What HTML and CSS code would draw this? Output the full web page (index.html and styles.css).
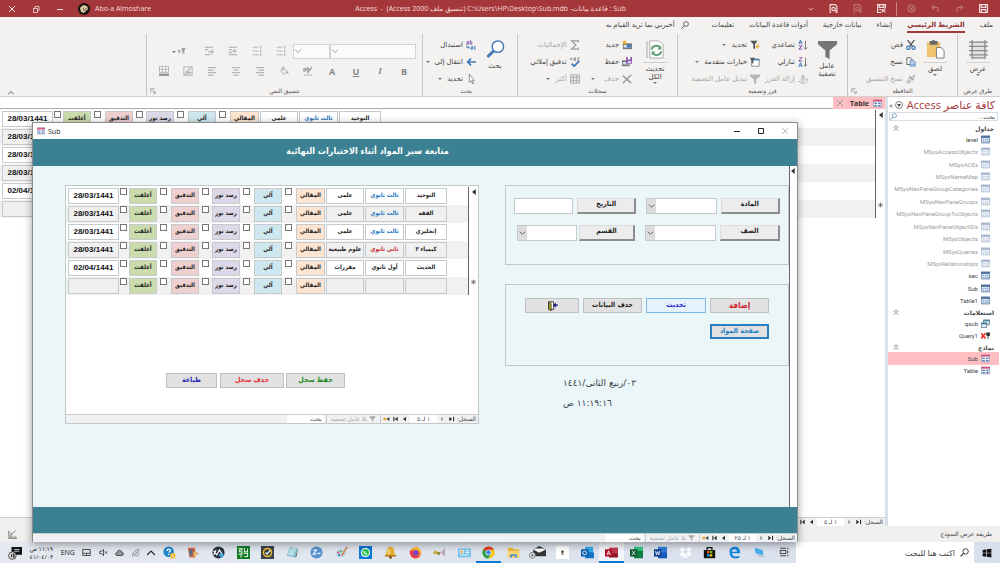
FILE: index.html
```html
<!DOCTYPE html>
<html lang="ar" dir="rtl">
<head>
<meta charset="utf-8">
<title>Sub - Access</title>
<link rel="stylesheet" href="styles.css">
</head>
<body>
<svg class="sprite" aria-hidden="true">
  <symbol id="save" viewBox="0 0 16 16"><path d="M1 1h14v14H1zM4 1v5h8V1M4 15v-5h8v5" fill="none" stroke="currentColor" stroke-width="2"/></symbol>
  <symbol id="saveas" viewBox="0 0 16 16"><path d="M15 7V1H1v14h6M4 1v5h8V1M4 10h4" fill="none" stroke="currentColor" stroke-width="2"/><path d="M8 15l7-7M9 9l6 6" stroke="currentColor" stroke-width="2"/></symbol>
  <symbol id="redo" viewBox="0 0 16 16"><path d="M10 2l4 4-4 4M14 6H6c-4 0-4 7 0 7" fill="none" stroke="currentColor" stroke-width="2"/></symbol>
  <symbol id="undo" viewBox="0 0 16 16"><path d="M6 2L2 6l4 4M2 6h8c4 0 4 7 0 7" fill="none" stroke="currentColor" stroke-width="2"/></symbol>
  <symbol id="touch" viewBox="0 0 16 16"><circle cx="8" cy="8" r="6" fill="none" stroke="currentColor" stroke-width="2"/><path d="M5 6l6 5M11 5l-5 6" stroke="currentColor" stroke-width="2"/></symbol>
  <symbol id="preview" viewBox="0 0 16 16"><path d="M4 15H2V1h9l3 3v11h-2" fill="none" stroke="currentColor" stroke-width="2"/><circle cx="8" cy="9" r="3" fill="none" stroke="currentColor" stroke-width="2"/><path d="M10 11l4 4" stroke="currentColor" stroke-width="2"/></symbol>
  <symbol id="mag" viewBox="0 0 16 16"><circle cx="10" cy="6" r="4.8" fill="none" stroke="currentColor" stroke-width="1.5"/><path d="M6.500 9.500L1 15" stroke="currentColor" stroke-width="1.800"/></symbol>
  <symbol id="find" viewBox="0 0 20 20"><circle cx="12.500" cy="7" r="6" fill="#fff" stroke="#3f78b8" stroke-width="1.500"/><path d="M8 11.500L1.500 18" stroke="#3f78b8" stroke-width="3"/></symbol>
  <symbol id="view" viewBox="0 0 18 18"><path d="M1 1h16v16H1z" fill="#e4e4e4"/><path d="M0 2h18M0 6h18M0 10h18M0 14h18M3 0v18M15 0v18M3 17h12" stroke="#8a8a8a" stroke-width="1.200"/></symbol>
  <symbol id="paste" viewBox="0 0 20 20"><path d="M1 2h14v16H1z" fill="#eec471"/><path d="M4 1h8v4H4z" fill="#666"/><circle cx="8" cy="1.500" r="1.500" fill="#666"/><path d="M11 8h5l3 3v8h-8z" fill="#fff" stroke="#777"/></symbol>
  <symbol id="cut" viewBox="0 0 12 12"><path d="M2 0l6 8M10 0L4 8" stroke="#555" stroke-width="1.500"/><circle cx="2.800" cy="9.300" r="2" fill="none" stroke="#3f78b8" stroke-width="1.500"/><circle cx="9" cy="9.300" r="2" fill="none" stroke="#3f78b8" stroke-width="1.500"/></symbol>
  <symbol id="copy" viewBox="0 0 12 12"><path d="M1 1h5l1 1v7H1z" fill="#fff" stroke="#555"/><path d="M5 4h4l2 2v5H5z" fill="#dbe9f7" stroke="#3f78b8"/><path d="M6 7h4M6 9h4" stroke="#3f78b8" stroke-width=".7"/></symbol>
  <symbol id="brush" viewBox="0 0 12 12"><path d="M11 1L8 4" stroke="#aaa" stroke-width="2"/><path d="M5 2l5 4-2 2-5-4z" fill="#999"/><path d="M3 5l4 4-4 3-3-2z" fill="#bbb"/></symbol>
  <symbol id="funnel" viewBox="0 0 18 18"><path d="M0 1h18v3l-7 6v8l-4-2v-6L0 4z" fill="currentColor"/></symbol>
  <symbol id="bolt" viewBox="0 0 12 12"><path d="M0 1h9L6 5v6L4 10V5z" fill="#555"/><path d="M10 4L6 9h3l-1 3 4-5H9l2-3z" fill="#edb23c"/></symbol>
  <symbol id="adv" viewBox="0 0 12 12"><path d="M2 3h9v8H2z" fill="#fff" stroke="#777"/><path d="M1 2h10v2H1z" fill="#3f78b8"/><path d="M0 1h6L4 4v4L2 7V4z" fill="#555"/></symbol>
  <symbol id="az" viewBox="0 0 12 12"><path d="M1 5l2-5 2 5M2 3.500h2" fill="none" stroke="#3f78b8" stroke-width="1.200"/><path d="M1 7h4l-4 4h4" fill="none" stroke="#8353a5" stroke-width="1.200"/><path d="M9 1v10M7 9l2 2 2-2" fill="none" stroke="#666"/></symbol>
  <symbol id="za" viewBox="0 0 12 12"><path d="M1 0h4L1 5h4" fill="none" stroke="#8353a5" stroke-width="1.200"/><path d="M1 12l2-5 2 5M2 10h2" fill="none" stroke="#3f78b8" stroke-width="1.200"/><path d="M9 1v10M7 9l2 2 2-2" fill="none" stroke="#666"/></symbol>
  <symbol id="unsort" viewBox="0 0 12 12"><path d="M4 6l2-5 2 5M5 4h2M4 7h4l-4 4h4M0 9h3l1 2M9 6h2v2L9 11" fill="none" stroke="#999"/></symbol>
  <symbol id="refresh" viewBox="0 0 20 20"><path d="M4 1h10l4 4v14H4z" fill="#fff" stroke="#aaa"/><path d="M1 1v18" stroke="#ccc" stroke-width="2"/><path d="M6 10c1-5 8-5 9-1M16 12c-1 5-8 5-9 1" fill="none" stroke="#5d9b73" stroke-width="2"/><path d="M16 6v4h-4zM6 16v-4h4z" fill="#5d9b73"/></symbol>
  <symbol id="new" viewBox="0 0 12 12"><path d="M1 4h11v7H1z" fill="#777"/><path d="M2 6h9v3H2z" fill="#cfe0f2"/><path d="M6 6h5v3H6z" fill="#3f78b8"/><circle cx="3" cy="3" r="2.300" fill="#edb23c"/></symbol>
  <symbol id="saverec" viewBox="0 0 12 12"><path d="M0 4h9v7H0z" fill="#777"/><path d="M1 6h7v3H1z" fill="#cfe0f2"/><path d="M5 0h7v8H5z" fill="#8353a5"/><path d="M7 0h3v3H7zM7 5h4v2H7z" fill="#fff"/></symbol>
  <symbol id="del" viewBox="0 0 12 12"><path d="M1 2l10 9M11 1L1 11" stroke="#888" stroke-width="1.800"/></symbol>
  <symbol id="sigma" viewBox="0 0 12 12"><path d="M10 3V1H2l5 5-5 5h8V9" fill="none" stroke="#888" stroke-width="1.500"/></symbol>
  <symbol id="spell" viewBox="0 0 12 12"><path d="M0 4l1.500-3L3 4M5 1v3h2L6 2.500 7 1zM11.500 1h-2v3h2" fill="none" stroke="#666" stroke-width=".8"/><path d="M2 8l3 3 6-6" fill="none" stroke="#3f78b8" stroke-width="2"/></symbol>
  <symbol id="more" viewBox="0 0 12 12"><path d="M.5 1h11v10H.5zM0 4h12M0 8h12M4 1v10M8 1v10" fill="#e6dfe6" stroke="#999"/></symbol>
  <symbol id="replace" viewBox="0 0 12 12"><path d="M1 2h2v3H1V3.500h2M5 0v5h2V2H5" fill="none" stroke="#8353a5"/><path d="M6 8h2v3H6V9.500h2M12 8h-2v3h2M1 6v3h3M3 7.500L4.500 9 3 10.500" fill="none" stroke="#3f78b8"/></symbol>
  <symbol id="goto" viewBox="0 0 12 12"><path d="M12 6H2M6 2L2 6l4 4" fill="none" stroke="#3f78b8" stroke-width="2"/></symbol>
  <symbol id="cursor" viewBox="0 0 12 12"><path d="M4 0v10l2-2 2 4 1-.5L7.500 8H10z" fill="#fff" stroke="#666" stroke-width=".8"/></symbol>
  <symbol id="list" viewBox="0 0 12 12"><path d="M1 1.500h7M1 6h7M1 10.500h7" stroke="#aaa"/><path d="M10.500 0v3M10.500 4.500v3M10.500 9v3" stroke="#999"/></symbol>
  <symbol id="indent" viewBox="0 0 12 12"><path d="M1 1.500h10M1 4.500h4M1 7.500h4M1 10.500h10M6 6h5M8 4L6 6l2 2" fill="none" stroke="#999"/></symbol>
  <symbol id="outdent" viewBox="0 0 12 12"><path d="M1 1.500h10M1 4.500h4M1 10.500h6M5 7h6M9 4l2 3-2 3" fill="none" stroke="#999"/></symbol>
  <symbol id="para" viewBox="0 0 12 12"><path d="M11 2H7c-2 0-2 3 0 3V11M9 2v9M1 4v5l3-2.500z" fill="#999" stroke="#999" stroke-width=".8"/></symbol>
  <symbol id="ar" viewBox="0 0 12 12"><path d="M1 2h10M4 5h7M1 8h10M4 11h7" stroke="#999"/></symbol>
  <symbol id="ac" viewBox="0 0 12 12"><path d="M1 2h10M3 5h6M1 8h10M3 11h6" stroke="#999"/></symbol>
  <symbol id="al" viewBox="0 0 12 12"><path d="M1 2h10M1 5h7M1 8h10M1 11h7" stroke="#999"/></symbol>
  <symbol id="bucket" viewBox="0 0 12 12"><path d="M5 2l5 5-4 3-4-4zM5 5V0M10 7l1 3" fill="#eee" stroke="#999"/></symbol>
  <symbol id="hl" viewBox="0 0 12 12"><path d="M1 3h2v3H1zM5 1v5h2V3H5M11 1L5 9" fill="none" stroke="#999" stroke-width="1.300"/><path d="M1 10h10v2H1z" fill="#ccc"/></symbol>
  <symbol id="gridl" viewBox="0 0 12 12"><path d="M1 1h10v10H1zM1 11L11 1M4 5v6M7 3v8M4 8h7" fill="none" stroke="#999" stroke-width=".8"/></symbol>
  <symbol id="alt" viewBox="0 0 12 12"><path d="M.5.500h11v7H.5zM0 4h12M4 0v8M8 0v8" fill="#fff" stroke="#999" stroke-width=".8"/><path d="M0 9h12v3H0z" fill="#999"/></symbol>
  <symbol id="launch" viewBox="0 0 8 8"><path d="M1 6V1h5M3 3l4 4M7 4v3H4" fill="none" stroke="#888"/></symbol>
  <symbol id="chev" viewBox="0 0 8 8"><path d="M1 2.500l3 3 3-3" fill="none" stroke="currentColor"/></symbol>
  <symbol id="up" viewBox="0 0 8 8"><path d="M0 6l4-4 4 4" fill="none" stroke="currentColor" stroke-width="1.200"/></symbol>
  <symbol id="dup" viewBox="0 0 8 8"><path d="M1 4l3-3 3 3M1 7.500l3-3 3 3" fill="none" stroke="#555"/></symbol>
  <symbol id="x" viewBox="0 0 8 8"><path d="M1 1l6 6M7 1L1 7" stroke="currentColor" stroke-width="1"/></symbol>
  <symbol id="min" viewBox="0 0 8 8"><path d="M1 4.500h6" stroke="currentColor"/></symbol>
  <symbol id="max" viewBox="0 0 8 8"><path d="M1.500 1.500h5v5h-5z" fill="none" stroke="currentColor"/></symbol>
  <symbol id="restore" viewBox="0 0 8 8"><path d="M1.500 3.500h4v4h-4zM3 3V1.500h4v4H6" fill="none" stroke="currentColor" stroke-width=".8"/></symbol>
  <symbol id="tbl" viewBox="0 0 12 12"><path d="M.5 1.500h11v9H.5z" fill="#fff" stroke="#4d6f9c"/><path d="M0 1h12v3H0z" fill="#4d6f9c"/><path d="M0 6h12M0 8.500h12M3.500 2v9M6.500 2v9M9 2v9" stroke="#7d9cc4" stroke-width=".8"/></symbol>
  <symbol id="form" viewBox="0 0 12 12"><path d="M.5 1.500h11v9H.5z" fill="#eef2fb" stroke="#8a93b5"/><path d="M0 1h12v2.500H0z" fill="#d0577b"/><path d="M2 5h3v1.500H2zM7 5h3v1.500H7zM2 8h3v1.500H2zM7 8h3v1.500H7z" fill="#4a6fae"/></symbol>
  <symbol id="query" viewBox="0 0 12 12"><path d="M3.500 1.500h8v6h-8z" fill="#cde" stroke="#567"/><path d="M3 1h9v2H3z" fill="#4d8a9c"/><path d="M.5 5.500h7v6h-7z" fill="#def" stroke="#567"/><path d="M0 5h8v2H0z" fill="#3c7c92"/></symbol>
  <symbol id="queryx" viewBox="0 0 12 12"><path d="M0 3l6 7M6 3L0 10" stroke="#e22" stroke-width="2"/><path d="M7 2h5v4l-2 1v4H9V7L7 6z" fill="#333"/></symbol>
  <symbol id="selarrow" viewBox="0 0 6 8"><path d="M6 0v8L1 4z" fill="#333"/></symbol>
  <symbol id="star" viewBox="0 0 8 8"><path d="M4 0v8M0 4h8M1 1l6 6M7 1L1 7" stroke="#333" stroke-width=".8"/></symbol>
  <symbol id="first" viewBox="0 0 8 8"><path d="M1 1l4 3-4 3zM6 1h1.500v6H6z" fill="#333"/></symbol>
  <symbol id="prev" viewBox="0 0 8 8"><path d="M2 1l4 3-4 3z" fill="#aaa"/></symbol>
  <symbol id="next" viewBox="0 0 8 8"><path d="M6 1L2 4l4 3z" fill="#333"/></symbol>
  <symbol id="last" viewBox="0 0 8 8"><path d="M7 1L3 4l4 3zM1 1h1.500v6H1z" fill="#333"/></symbol>
  <symbol id="newrec" viewBox="0 0 10 8"><path d="M9 1L5 4l4 3z" fill="#333"/><circle cx="2.500" cy="4" r="2.300" fill="#e5a93a"/></symbol>
  <symbol id="door" viewBox="0 0 14 12"><path d="M3 1h6v9H3z" fill="#fff" stroke="#222"/><path d="M3 1l3 2v9l-3-2z" fill="#aa2" stroke="#222" stroke-width=".8"/><path d="M14 5h-4M11.500 3l-2 2 2 2" fill="none" stroke="#118" stroke-width="1.500"/></symbol>
  <symbol id="design" viewBox="0 0 12 12"><path d="M1 1v7h4M3 7l7-6M2 3l4 4M1 9.500h10v2H1z" fill="none" stroke="#666"/></symbol>

  <symbol id="win" viewBox="0 0 16 16"><path d="M1 3l6-1v5.500H1zM8 2l7-1v6.500H8zM1 8.500h6V14l-6-1zM8 8.500h7V15l-7-1z" fill="#111"/></symbol>
  <symbol id="task" viewBox="0 0 16 16"><path d="M2 5.500h9v5H2zM2 2h9M2 14h9M14 1v3M14 6v4M14 12v3" fill="none" stroke="#222" stroke-width="1.300"/></symbol>
  <symbol id="pc" viewBox="0 0 16 16"><path d="M2 2l10 3 1 7-10-3z" fill="#4ab0ec"/><path d="M3 10l9 2 3 1-6 1z" fill="#b8c4cf"/></symbol>
  <symbol id="edge" viewBox="0 0 16 16"><path d="M1 8C2 2 6 1 9 1c4 0 6 3 6 8H5c0 4 5 5 9 3v2c-5 3-12 1-12-5 0-3 3-5 5-5-2 1-2 2-2 3h6c0-4-7-4-10 1z" fill="#1183d8"/></symbol>
  <symbol id="store" viewBox="0 0 16 16"><path d="M1 5h14v10H1z" fill="#111"/><path d="M5 5V2h6v3" fill="none" stroke="#111" stroke-width="1.500"/><path d="M5 6h3v3H5z" fill="#f25022"/><path d="M8.500 6h3v3h-3z" fill="#7fba00"/><path d="M5 10h3v3H5z" fill="#00a4ef"/><path d="M8.500 10h3v3h-3z" fill="#ffb900"/></symbol>
  <symbol id="dropbox" viewBox="0 0 16 16"><path d="M4 1l4 3-4 3-4-3zM12 1l4 3-4 3-4-3zM4 7l4 3-4 3-4-3zM12 7l4 3-4 3-4-3zM8 11l3 2-3 2-3-2z" fill="#fff"/></symbol>
  <symbol id="word" viewBox="0 0 16 16"><path d="M5 1h11v14H5z" fill="#2b7cd3"/><path d="M5 8h11v7H5z" fill="#185abd"/><path d="M0 4h9v9H0z" fill="#103f91"/><path d="M2 6l1 5 1.500-4L6 11l1-5" fill="none" stroke="#fff"/></symbol>
  <symbol id="excel" viewBox="0 0 16 16"><path d="M5 1h11v14H5z" fill="#33c481"/><path d="M5 6h11v9H5z" fill="#107c41"/><path d="M0 4h9v9H0z" fill="#0c5c34"/><path d="M2.500 6l4 5M6.500 6l-4 5" stroke="#fff"/></symbol>
  <symbol id="access" viewBox="0 0 16 16"><path d="M5 2h11v12H5z" fill="#c03a4c"/><path d="M5 9h11v5H5z" fill="#8f1f30"/><path d="M0 4h9v9H0z" fill="#b3132b"/><path d="M2.500 11l2-5 2 5M3 9.500h3" fill="none" stroke="#fff"/></symbol>
  <symbol id="outlook" viewBox="0 0 16 16"><path d="M5 1h10v8H5z" fill="#35a6e6"/><path d="M5 7l11 1v7H5z" fill="#1573c4"/><path d="M0 4h9v9H0z" fill="#0f5fb0"/><circle cx="4.500" cy="8.500" r="2.300" fill="none" stroke="#fff"/></symbol>
  <symbol id="white" viewBox="0 0 16 16"><path d="M0 0h16v16H0z" fill="#fff"/><circle cx="8" cy="7" r="1.500" fill="#333"/><path d="M6.500 9h3v2h-3z" fill="#b87"/></symbol>
  <symbol id="mail" viewBox="0 0 20 16"><path d="M5 5l7-4 8 4v8H5z" fill="#333"/><path d="M5 5l7 4 8-4-4-1H8z" fill="#fff"/><circle cx="4" cy="12" r="3.500" fill="#ddd" stroke="#777"/><circle cx="4" cy="12" r="1" fill="#333"/></symbol>
  <symbol id="folder" viewBox="0 0 16 16"><path d="M1 2h6l1 2h7v10H1z" fill="#f1b83a"/><path d="M1 6h14v7H1z" fill="#fbd775"/><path d="M4 14v-4h8v4h-2v-2H6v2z" fill="#3b8fd1"/></symbol>
  <symbol id="chrome" viewBox="0 0 16 16"><circle cx="8" cy="8" r="7.500" fill="#f9c513"/><path d="M8 8L1.500 4.200A7.500 7.500 0 0 1 14.600 4.500H8z" fill="#e33b2e"/><path d="M8 8L1.500 4.200A7.500 7.500 0 0 0 7.500 15.500L11 10z" fill="#2ba24c"/><circle cx="8" cy="8" r="3.500" fill="#fff"/><circle cx="8" cy="8" r="2.700" fill="#3f7fe8"/></symbol>
  <symbol id="panel" viewBox="0 0 16 16"><path d="M0 3h16v11H0z" fill="#76c4ee"/><path d="M2 5h5v4H2z" fill="#fff"/><circle cx="4.500" cy="7" r="1.500" fill="#e69a2c"/><path d="M9 6h5M9 8h5M3 11h10" stroke="#fff"/></symbol>
  <symbol id="horn" viewBox="0 0 16 16"><circle cx="3" cy="8" r="2.500" fill="#c9b03a"/><circle cx="7" cy="9" r="2" fill="#8a8a3a"/><path d="M9 8l5-4v8z" fill="#c9a5b5"/><path d="M14 3v9" stroke="#999"/></symbol>
  <symbol id="firefox" viewBox="0 0 16 16"><circle cx="8" cy="8.500" r="7" fill="#f5832b"/><path d="M2 3c3 2 5-2 8-2 4 2 6 6 5 9-3-5-5-3-8-5z" fill="#fbc02d"/><circle cx="8.500" cy="8.500" r="3.500" fill="#8141c4"/><path d="M1 6c0 9 8 11 13 6-5 2-9 0-10-6z" fill="#e8344d"/></symbol>
  <symbol id="bell" viewBox="0 0 16 16"><path d="M8 1c5 0 4 6 6 10H2C4 7 3 1 8 1z" fill="#e9b231"/><path d="M1 11h14v2H1z" fill="#b87a16"/><circle cx="8" cy="14" r="1.800" fill="#8a5512"/><path d="M6 4v6" stroke="#fdf0b4" stroke-width="1.500"/></symbol>
  <symbol id="whats" viewBox="0 0 16 16"><path d="M0 0h16v16H0z" fill="#0a78d4"/><circle cx="8" cy="8" r="5" fill="#2bc155" stroke="#fff" stroke-width="1.300"/><path d="M3 13l1-3 2 2z" fill="#fff"/><path d="M6 6c0 2 2 4 4 4" fill="none" stroke="#fff" stroke-width="1.500"/></symbol>
  <symbol id="paint" viewBox="0 0 16 16"><ellipse cx="7" cy="9" rx="6.500" ry="5" fill="#bcd9ea"/><circle cx="4" cy="8" r="1.300" fill="#d44"/><circle cx="7" cy="6.500" r="1.300" fill="#4a4"/><circle cx="5" cy="11" r="1.300" fill="#36c"/><path d="M15 1L8 12" stroke="#c8884b" stroke-width="2"/></symbol>
  <symbol id="bluec" viewBox="0 0 16 16"><circle cx="8" cy="8" r="7.500" fill="#5b93cf"/><path d="M4 5h4L4 10h4M9 9h4" fill="none" stroke="#e6f0fa" stroke-width="1.500"/></symbol>
  <symbol id="note" viewBox="0 0 16 16"><path d="M5 1l10 2-4 11L1 12z" fill="#7fbccd"/><path d="M6 2l7 1-4 9-7-1z" fill="#b5dde7"/><path d="M15 3l-2 10-2 1z" fill="#567"/></symbol>
  <symbol id="norton" viewBox="0 0 16 16"><path d="M0 0h16v16H0z" fill="#3a4249"/><circle cx="8" cy="8" r="5" fill="none" stroke="#f2c22e" stroke-width="1.800"/><path d="M5.500 8l2 2 4-5" fill="none" stroke="#fff" stroke-width="1.500"/></symbol>
  <symbol id="green" viewBox="0 0 16 16"><path d="M0 0h16v16H0z" fill="#127a27"/><path d="M2 3h4v2H3v2h3v3H2M9 2v5h4V3M8 9h5v4H9M5 11v3" fill="none" stroke="#dff0df" stroke-width="1.300"/></symbol>
  <symbol id="sn" viewBox="0 0 16 16"><circle cx="8" cy="8" r="7.500" fill="#26323c"/><path d="M2 6l4 5 3-6 4 6M2 11l3-6" fill="none" stroke="#fff" stroke-width="1.500"/><path d="M8 10l5-1 2 3-4 3z" fill="#4ba3df"/></symbol>
  <symbol id="orange" viewBox="0 0 16 16"><path d="M1 2h9v12H3z" fill="#d9683a"/><path d="M3 4h4v8H3z" fill="#5a6b86"/><path d="M8 7l6 1v2l-6 3z" fill="#f0b35a"/><path d="M11 5v5h4" fill="none" stroke="#bbb"/></symbol>
  <symbol id="help" viewBox="0 0 16 16"><circle cx="7" cy="7" r="6.500" fill="#1d86cf"/><path d="M5 6c0-3 5-3 4 0L7 8M7 9.500v1.500" fill="none" stroke="#fff" stroke-width="1.500"/><circle cx="12" cy="12" r="3.500" fill="#f3b62c"/><path d="M12 10v4" stroke="#fff"/></symbol>
  <symbol id="wifi" viewBox="0 0 12 12"><path d="M1 11C1 5 5 1 11 1M4 11c0-4 3-7 7-7M7 11c0-2 2-4 4-4M10 10v1" fill="none" stroke="#666" stroke-width="1.200"/></symbol>
  <symbol id="cloud" viewBox="0 0 12 12"><path d="M3 10c-3 0-3-4 0-4 0-4 6-4 6 0 3 0 3 4 0 4z" fill="#999" stroke="#222"/></symbol>
  <symbol id="vol" viewBox="0 0 12 12"><path d="M1 4.500h2l3-2.500v8L3 7.500H1zM8 4.500l3 3M11 4.500l-3 3" fill="none" stroke="#222"/></symbol>
  <symbol id="pad" viewBox="0 0 12 12"><path d="M1 2h10v8H1zM1 7h10M6 7v3" fill="none" stroke="#222"/></symbol>
  <symbol id="notif" viewBox="0 0 16 16"><path d="M4 1h12v9H9l-3 3v-3H4z" fill="#111"/><path d="M7 4h6M7 6h6" stroke="#fff" stroke-width=".8"/><circle cx="5" cy="11" r="4.300" fill="#ddd" stroke="#444"/><path d="M4 9v4M6 9h1v4H6z" fill="none" stroke="#222"/></symbol>
</svg>

<div class="app">
  <header class="titlebar">
    <div class="quick">
      <svg class="i9"><use href="#save"/></svg>
      <svg class="i9 dim"><use href="#redo"/></svg>
      <svg class="i9 dim"><use href="#undo"/></svg>
      <svg class="i9 dim"><use href="#touch"/></svg>
      <span class="tsep"></span>
      <svg class="i9"><use href="#saveas"/></svg>
      <svg class="i9 dim"><use href="#preview"/></svg>
      <svg class="i9"><use href="#preview"/></svg>
      <svg class="i6"><use href="#chev"/></svg>
    </div>
    <h1 class="apptitle">Sub : قاعدة بيانات- <bdi dir="ltr">C:\Users\HP\Desktop\Sub.mdb</bdi> (تنسيق ملف Access 2000)&nbsp; -&nbsp; Access</h1>
    <div class="account">
      <span>Abo-a Almoshare</span>
      <svg class="avatar" viewBox="0 0 12 12"><circle cx="6" cy="6" r="6" fill="#181410"/><path d="M2 5l3-3 4 1 1 3-4 4-3-1z" fill="#d9c9a0"/><path d="M5 5l1 1M8 5v1M5 7h3" stroke="#443" stroke-width=".8"/></svg>
      <button class="cap" aria-label="تصغير"><svg class="i8"><use href="#min"/></svg></button>
      <button class="cap" aria-label="استعادة"><svg class="i8"><use href="#restore"/></svg></button>
      <button class="cap" aria-label="إغلاق"><svg class="i8"><use href="#x"/></svg></button>
    </div>
  </header>

  <nav class="tabs">
    <button>ملف</button>
    <button class="on">الشريط الرئيسي</button>
    <button>إنشاء</button>
    <button>بيانات خارجية</button>
    <button>أدوات قاعدة البيانات</button>
    <button>تعليمات</button>
    <button class="tell"><svg class="i8"><use href="#mag"/></svg>أخبرني بما تريد القيام به</button>
  </nav>

  <section class="ribbon">
    <div class="group g-view">
      <div class="tools"><button class="big"><svg class="i18"><use href="#view"/></svg><i class="rule"></i>عرض<i class="dd"></i></button></div>
      <p>طرق عرض</p>
    </div>
    <div class="group g-clip">
      <div class="tools">
        <button class="big"><svg class="i18"><use href="#paste"/></svg><i class="rule"></i>لصق<i class="dd"></i></button>
        <div class="col">
          <button><svg class="i10"><use href="#cut"/></svg>قص</button>
          <button><svg class="i10"><use href="#copy"/></svg>نسخ</button>
          <button class="off"><svg class="i10"><use href="#brush"/></svg>نسخ التنسيق</button>
        </div>
      </div>
      <p>الحافظة</p><svg class="launch"><use href="#launch"/></svg>
    </div>
    <div class="group g-sort">
      <div class="tools">
        <button class="big grey"><svg class="i18"><use href="#funnel"/></svg>عامل<br>تصفية</button>
        <div class="col">
          <button><svg class="i10"><use href="#az"/></svg>تصاعدي</button>
          <button><svg class="i10"><use href="#za"/></svg>تنازلي</button>
          <button class="off"><svg class="i10"><use href="#unsort"/></svg>إزالة الفرز</button>
        </div>
        <div class="col">
          <button><svg class="i10"><use href="#bolt"/></svg>تحديد<i class="dd"></i></button>
          <button><svg class="i10"><use href="#adv"/></svg>خيارات متقدمة<i class="dd"></i></button>
          <button class="off"><svg class="i10"><use href="#funnel"/></svg>تبديل عامل التصفية</button>
        </div>
      </div>
      <p>فرز وتصفية</p>
    </div>
    <div class="group g-rec">
      <div class="tools">
        <button class="big"><svg class="i18"><use href="#refresh"/></svg><i class="rule"></i>تحديث<br>الكل<i class="dd"></i></button>
        <div class="col">
          <button><svg class="i10"><use href="#new"/></svg>جديد</button>
          <button><svg class="i10"><use href="#saverec"/></svg>حفظ</button>
          <button class="off"><svg class="i10"><use href="#del"/></svg>حذف<i class="dd apart"></i></button>
        </div>
        <div class="col">
          <button class="off"><svg class="i10"><use href="#sigma"/></svg>الإجماليات</button>
          <button><svg class="i10"><use href="#spell"/></svg>تدقيق إملائي</button>
          <button class="off"><svg class="i10"><use href="#more"/></svg>أكثر<i class="dd"></i></button>
        </div>
      </div>
      <p>سجلات</p>
    </div>
    <div class="group g-find">
      <div class="tools">
        <button class="big"><svg class="i18"><use href="#find"/></svg>بحث</button>
        <div class="col">
          <button><svg class="i10"><use href="#replace"/></svg>استبدال</button>
          <button><svg class="i10"><use href="#goto"/></svg>انتقال إلى<i class="dd"></i></button>
          <button><svg class="i10"><use href="#cursor"/></svg>تحديد<i class="dd"></i></button>
        </div>
      </div>
      <p>بحث</p>
    </div>
    <div class="group g-text">
      <div class="fmt">
        <div class="fmtrow">
          <span class="fonts"><span class="combo wide"><select aria-label="الخط" disabled></select><svg class="i8"><use href="#chev"/></svg></span><span class="combo size"><select aria-label="حجم الخط" disabled></select><svg class="i8"><use href="#chev"/></svg></span></span>
          <svg class="i10"><use href="#list"/></svg><svg class="i10"><use href="#list"/></svg><svg class="i10"><use href="#indent"/></svg><svg class="i10"><use href="#outdent"/></svg><span class="pair"><svg class="i8"><use href="#para"/></svg><i class="dd"></i></span>
        </div>
        <div class="fmtrow second-row">
          <b>B</b><b class="it">I</b><b class="un">U</b><b>A</b>
          <svg class="i10"><use href="#hl"/></svg><svg class="i10"><use href="#bucket"/></svg><svg class="i10"><use href="#ar"/></svg><svg class="i10"><use href="#ac"/></svg><svg class="i10"><use href="#al"/></svg><svg class="i10"><use href="#gridl"/></svg><svg class="i10"><use href="#alt"/></svg>
        </div>
      </div>
      <p>تنسيق النص</p><svg class="launch"><use href="#launch"/></svg>
    </div>
    <button class="collapse" aria-label="طي الشريط"><svg class="i6"><use href="#up"/></svg></button>
  </section>

  <main class="work">
    <aside class="objects">
      <div class="ohead"><h2>كافة عناصر Access</h2><svg class="i8" viewBox="0 0 8 8"><circle cx="4" cy="4" r="3.500" fill="none" stroke="#666" stroke-width=".8"/><path d="M2 3h4L4 6z" fill="#444"/></svg><span>»</span></div>
      <div class="osearch"><input aria-label="بحث" placeholder="بحث..."><svg class="i8"><use href="#mag"/></svg></div>
      <h3>جداول<svg class="i6"><use href="#dup"/></svg></h3>
      <ul class="tables">
        <li><svg class="i9"><use href="#tbl"/></svg>level</li>
        <li class="sys"><svg class="i9"><use href="#tbl"/></svg>MSysAccessObjects</li>
        <li class="sys"><svg class="i9"><use href="#tbl"/></svg>MSysACEs</li>
        <li class="sys"><svg class="i9"><use href="#tbl"/></svg>MSysNameMap</li>
        <li class="sys"><svg class="i9"><use href="#tbl"/></svg>MSysNavPaneGroupCategories</li>
        <li class="sys"><svg class="i9"><use href="#tbl"/></svg>MSysNavPaneGroups</li>
        <li class="sys"><svg class="i9"><use href="#tbl"/></svg>MSysNavPaneGroupToObjects</li>
        <li class="sys"><svg class="i9"><use href="#tbl"/></svg>MSysNavPaneObjectIDs</li>
        <li class="sys"><svg class="i9"><use href="#tbl"/></svg>MSysObjects</li>
        <li class="sys"><svg class="i9"><use href="#tbl"/></svg>MSysQueries</li>
        <li class="sys"><svg class="i9"><use href="#tbl"/></svg>MSysRelationships</li>
        <li><svg class="i9"><use href="#tbl"/></svg>sec</li>
        <li><svg class="i9"><use href="#tbl"/></svg>Sub</li>
        <li><svg class="i9"><use href="#tbl"/></svg>Table1</li>
      </ul>
      <h3>استعلامات<svg class="i6"><use href="#dup"/></svg></h3>
      <ul class="few">
        <li><svg class="i9"><use href="#query"/></svg>qsub</li>
        <li><svg class="i9"><use href="#queryx"/></svg>Query1</li>
      </ul>
      <h3>نماذج<svg class="i6"><use href="#dup"/></svg></h3>
      <ul class="few">
        <li class="sel"><svg class="i9"><use href="#form"/></svg>Sub</li>
        <li><svg class="i9"><use href="#form"/></svg>Table</li>
      </ul>
    </aside>

    <section class="doc">
      <div class="doctabs"><div class="doctab"><svg class="i9"><use href="#form"/></svg><b>Table</b><svg class="i8 tabx"><use href="#x"/></svg></div></div>
      <div class="sheet">
        <div class="rec">
          <span class="pick"><svg><use href="#selarrow"/></svg></span><span class="gap"></span><span class="c">التوحيد</span><span class="c blue">ثالث ثانوي</span><span class="c">علمى</span><span class="c peach">المقالي</span><input type="checkbox" aria-label="المقالي"><span class="c cyan">آلي</span><input type="checkbox" aria-label="آلي"><span class="c lilac">رصد نور</span><input type="checkbox" aria-label="رصد نور"><span class="c rose">التدقيق</span><input type="checkbox" aria-label="التدقيق"><span class="c green">أغلقت</span><input type="checkbox" aria-label="أغلقت"><span class="c date">28/03/1441</span>
        </div>
        <div class="rec alt"><span class="pick"></span><span class="c date">28/03/1441</span></div>
        <div class="rec"><span class="pick"></span><span class="c date">28/03/1441</span></div>
        <div class="rec alt"><span class="pick"></span><span class="c date">28/03/1441</span></div>
        <div class="rec"><span class="pick"></span><span class="c date">02/04/1441</span></div>
        <div class="rec alt"><span class="pick"><svg><use href="#star"/></svg></span><span class="c date"></span></div>
      </div>
      <div class="recnav"><span>السجل:</span><svg><use href="#first"/></svg><svg><use href="#prev"/></svg><span class="pos">١ لـ ٥</span><svg><use href="#next"/></svg><svg><use href="#last"/></svg></div>
    </section>
  </main>

  <footer class="status"><span>طريقة عرض النموذج</span><svg class="i9"><use href="#design"/></svg></footer>

  <footer class="taskbar">
    <button class="start" aria-label="ابدأ"><svg class="i10"><use href="#win"/></svg></button>
    <div class="tsearch"><svg class="i9"><use href="#mag"/></svg><input aria-label="اكتب هنا للبحث" placeholder="اكتب هنا للبحث"></div>
    <div class="apps">
      <span><svg class="i10"><use href="#task"/></svg></span>
      <span><svg><use href="#pc"/></svg></span>
      <span><svg><use href="#edge"/></svg></span>
      <span><svg><use href="#store"/></svg></span>
      <span><svg><use href="#dropbox"/></svg></span>
      <span><svg><use href="#word"/></svg></span>
      <span><svg><use href="#excel"/></svg></span>
      <span class="open active"><svg><use href="#access"/></svg></span>
      <span><svg><use href="#outlook"/></svg></span>
      <span><svg><use href="#white"/></svg></span>
      <span><svg class="wide"><use href="#mail"/></svg></span>
      <span><svg><use href="#folder"/></svg></span>
      <span class="open"><svg><use href="#chrome"/></svg></span>
      <span><svg><use href="#panel"/></svg></span>
      <span><svg><use href="#horn"/></svg></span>
      <span><svg><use href="#firefox"/></svg></span>
      <span><svg><use href="#bell"/></svg></span>
      <span><svg><use href="#whats"/></svg></span>
      <span><svg><use href="#paint"/></svg></span>
      <span><svg><use href="#bluec"/></svg></span>
      <span><svg><use href="#note"/></svg></span>
      <span><svg><use href="#norton"/></svg></span>
      <span><svg><use href="#green"/></svg></span>
      <span><svg><use href="#sn"/></svg></span>
      <span><svg><use href="#orange"/></svg></span>
      <span><svg><use href="#help"/></svg></span>
    </div>
    <div class="tray">
      <svg class="i8"><use href="#up"/></svg><svg class="i8"><use href="#wifi"/></svg><svg class="i9"><use href="#cloud"/></svg><svg class="i9"><use href="#vol"/></svg><svg class="i9"><use href="#pad"/></svg><span>ENG</span>
      <time><span>١١:١٩ ص</span><span dir="ltr">٤١/٠٤/٠٣</span></time>
      <svg class="note"><use href="#notif"/></svg>
    </div>
  </footer>
</div>

<section class="window">
  <header class="wbar">
    <button class="cap pale" aria-label="إغلاق"><svg class="i8"><use href="#x"/></svg></button>
    <button class="cap" aria-label="تكبير"><svg class="i8"><use href="#max"/></svg></button>
    <button class="cap" aria-label="تصغير"><svg class="i8"><use href="#min"/></svg></button>
    <span class="wtitle">Sub<svg class="i8"><use href="#form"/></svg></span>
  </header>
  <div class="band"><h2>متابعة سير المواد أثناء الاختبارات النهائية</h2></div>
  <div class="wbody">
    <div class="strip"><svg><use href="#selarrow"/></svg></div>
    <div class="side">
      <form class="panel filters">
        <div class="frow">
          <label for="subject">المادة</label>
          <span class="combo f-a"><select id="subject"></select><svg class="i8"><use href="#chev"/></svg></span>
          <label for="date" class="second">التاريخ</label>
          <input id="date" type="text">
        </div>
        <div class="frow">
          <label for="grade">الصف</label>
          <span class="combo f-a"><select id="grade"></select><svg class="i8"><use href="#chev"/></svg></span>
          <label for="section" class="second short">القسم</label>
          <span class="combo f-b"><select id="section"></select><svg class="i8"><use href="#chev"/></svg></span>
        </div>
      </form>
      <div class="panel actions">
        <button class="btn red">إضافة</button>
        <button class="btn hot">تحديث</button>
        <button class="btn">حذف البيانات</button>
        <button class="btn" aria-label="خروج"><svg class="door"><use href="#door"/></svg></button>
        <button class="btn focus">صفحة المواد</button>
      </div>
      <div class="now"><span>٠٣/ربيع الثانى/١٤٤١</span><span>١١:١٩:١٦ ص</span></div>
    </div>
    <div class="subform">
      <div class="rows">
        <div class="rec"><span class="pick"><svg><use href="#selarrow"/></svg></span><span class="gap"></span><span class="c">التوحيد</span><span class="c blue">ثالث ثانوي</span><span class="c">علمى</span><span class="c peach">المقالي</span><input type="checkbox" aria-label="المقالي"><span class="c cyan">آلي</span><input type="checkbox" aria-label="آلي"><span class="c lilac">رصد نور</span><input type="checkbox" aria-label="رصد نور"><span class="c rose">التدقيق</span><input type="checkbox" aria-label="التدقيق"><span class="c green">أغلقت</span><input type="checkbox" aria-label="أغلقت"><span class="c date">28/03/1441</span></div>
        <div class="rec alt"><span class="pick"></span><span class="gap"></span><span class="c">الفقه</span><span class="c blue">ثالث ثانوي</span><span class="c">علمى</span><span class="c peach">المقالي</span><input type="checkbox" aria-label="المقالي"><span class="c cyan">آلي</span><input type="checkbox" aria-label="آلي"><span class="c lilac">رصد نور</span><input type="checkbox" aria-label="رصد نور"><span class="c rose">التدقيق</span><input type="checkbox" aria-label="التدقيق"><span class="c green">أغلقت</span><input type="checkbox" aria-label="أغلقت"><span class="c date">28/03/1441</span></div>
        <div class="rec"><span class="pick"></span><span class="gap"></span><span class="c">إنجليزي</span><span class="c blue">ثالث ثانوي</span><span class="c">علمى</span><span class="c peach">المقالي</span><input type="checkbox" aria-label="المقالي"><span class="c cyan">آلي</span><input type="checkbox" aria-label="آلي"><span class="c lilac">رصد نور</span><input type="checkbox" aria-label="رصد نور"><span class="c rose">التدقيق</span><input type="checkbox" aria-label="التدقيق"><span class="c green">أغلقت</span><input type="checkbox" aria-label="أغلقت"><span class="c date">28/03/1441</span></div>
        <div class="rec alt"><span class="pick"></span><span class="gap"></span><span class="c">كيمياء ٣</span><span class="c crimson">ثانى ثانوي</span><span class="c">علوم طبيعية</span><span class="c peach">المقالي</span><input type="checkbox" aria-label="المقالي"><span class="c cyan">آلي</span><input type="checkbox" aria-label="آلي"><span class="c lilac">رصد نور</span><input type="checkbox" aria-label="رصد نور"><span class="c rose">التدقيق</span><input type="checkbox" aria-label="التدقيق"><span class="c green">أغلقت</span><input type="checkbox" aria-label="أغلقت"><span class="c date">28/03/1441</span></div>
        <div class="rec"><span class="pick"></span><span class="gap"></span><span class="c">الحديث</span><span class="c">أول ثانوي</span><span class="c">مقررات</span><span class="c peach">المقالي</span><input type="checkbox" aria-label="المقالي"><span class="c cyan">آلي</span><input type="checkbox" aria-label="آلي"><span class="c lilac">رصد نور</span><input type="checkbox" aria-label="رصد نور"><span class="c rose">التدقيق</span><input type="checkbox" aria-label="التدقيق"><span class="c green">أغلقت</span><input type="checkbox" aria-label="أغلقت"><span class="c date">02/04/1441</span></div>
        <div class="rec alt"><span class="pick"><svg><use href="#star"/></svg></span><span class="gap"></span><span class="c"></span><span class="c"></span><span class="c"></span><span class="c peach">المقالي</span><input type="checkbox" aria-label="المقالي"><span class="c cyan">آلي</span><input type="checkbox" aria-label="آلي"><span class="c lilac">رصد نور</span><input type="checkbox" aria-label="رصد نور"><span class="c rose">التدقيق</span><input type="checkbox" aria-label="التدقيق"><span class="c green">أغلقت</span><input type="checkbox" aria-label="أغلقت"><span class="c date"></span></div>
      </div>
      <div class="subbtns">
        <button class="btn grn">حفظ سجل</button>
        <button class="btn del">حذف سجل</button>
        <button class="btn prt">طباعة</button>
      </div>
      <div class="recnav"><span>السجل:</span><svg><use href="#first"/></svg><svg><use href="#prev"/></svg><span class="pos">١ لـ ٥</span><svg><use href="#next"/></svg><svg><use href="#last"/></svg><svg><use href="#newrec"/></svg><span class="nofilter"><svg><use href="#funnel"/></svg>بلا عامل تصفية</span><span class="find">بحث</span></div>
    </div>
  </div>
  <div class="band foot"></div>
  <div class="recnav"><span>السجل:</span><svg><use href="#first"/></svg><svg><use href="#prev"/></svg><span class="pos">١ لـ ٢٥</span><svg><use href="#next"/></svg><svg><use href="#last"/></svg><svg><use href="#newrec"/></svg><span class="nofilter"><svg><use href="#funnel"/></svg>بلا عامل تصفية</span><span class="find">بحث</span></div>
</section>
</body>
</html>
```

FILE: styles.css
```css
* { box-sizing: border-box; }
body { margin: 0; font: 7px/9px "Open Sans", "DejaVu Sans", sans-serif; color: #444; background: #fff; overflow: hidden; }
button, input, select { font: inherit; color: inherit; margin: 0; padding: 0; border: 0; background: none; border-radius: 0; }
h1, h2, h3, p, ul { margin: 0; padding: 0; font-weight: 400; list-style: none; }
svg { display: block; flex: none; }
.sprite { position: absolute; width: 0; height: 0; }
.i6 { width: 6px; height: 6px; }
.i8 { width: 8px; height: 8px; }
.i9 { width: 9px; height: 9px; }
.i10 { width: 10px; height: 10px; }
.i18 { width: 19px; height: 19px; }

.app { display: flex; flex-direction: column; height: 100vh; }

/* title bar */
.titlebar { display: flex; align-items: center; height: 17px; background: #a4373a; color: #f6dede; flex: none; }
.quick { display: flex; flex: 1; align-items: center; gap: 15px; padding-right: 12px; }
.quick .tsep { width: 1px; height: 14px; margin: 0 -5px; background: #c98486; }
.dim { opacity: .35; }
.apptitle { font-size: 7px; white-space: nowrap; margin-right: 10px; }
.account { display: flex; flex: 1; justify-content: flex-end; align-items: center; padding-left: 3px; }
.avatar { width: 12px; height: 12px; margin: 0 5px 0 6px; }
.cap { display: flex; align-items: center; justify-content: center; width: 24px; height: 16px; }
.account .cap:last-child { width: 18px; margin-right: 3px; }

/* ribbon tabs */
.tabs { display: flex; align-items: center; gap: 15px; height: 17px; padding: 0 7px; background: #f3f2f1; flex: none; }
.tabs button { height: 15px; border-bottom: 2px solid transparent; white-space: nowrap; }
.tabs .on { font-weight: 700; color: #8f3033; border-color: #a4373a; }
.tell { display: flex; align-items: center; gap: 6px; margin-right: 8px; }

/* ribbon */
.ribbon { display: flex; height: 63px; background: #f3f2f1; border-bottom: 1px solid #d2d0ce; flex: none; }
.group { display: grid; grid-template: 1fr 9px / 1fr; padding-top: 2px; border-left: 1px solid #c8c6c4; flex: none; font-size: 7px; }
.group p { grid-area: 2 / 1; text-align: center; color: #555; font-size: 6px; }
.launch { grid-area: 2 / 1; justify-self: end; width: 6px; height: 6px; margin: 1px 0 0 3px; }
.g-view { width: 43px; }
.g-clip { width: 110px; }
.g-sort { width: 170px; }
.g-rec { width: 160px; }
.g-find { width: 95px; }
.g-text { width: 276px; }
.tools { display: flex; gap: 5px; padding: 0 8px; }
.g-rec .tools { gap: 9px; }
.g-sort .tools { padding-right: 6px; }
.big { display: flex; flex-direction: column; align-items: center; width: 28px; padding-top: 4px; line-height: 8px; flex: none; }
.big .i18 { margin-bottom: 3px; }
.big.grey .i18 { color: #767676; }
.rule { width: 24px; height: 1px; margin-bottom: 2px; background: #d2d0ce; }
.dd { width: 0; height: 0; border: 2px solid transparent; border-top-color: #777; border-bottom: 0; margin: 1px 2px 0; }
.apart { margin-right: 6px; }
.col { display: grid; grid-template-rows: repeat(3, 1fr); }
.col button { display: flex; align-items: center; gap: 3px; white-space: nowrap; }
.off { color: #a8a6a4; }
.off svg { opacity: .8; }
.fmt { padding: 6px 6px 0; display: grid; grid-template-rows: 18px 22px; }
.fmtrow { display: flex; align-items: center; gap: 14px; }
.second-row { padding-right: 7px; }
.fmtrow b { width: 10px; text-align: center; font-size: 9px; color: #8a8886; }
.fmtrow .it { font-style: italic; font-family: "Liberation Serif", serif; }
.fmtrow .un { text-decoration: underline; }
.fonts { display: flex; margin-left: -7px; }
.pair { display: flex; align-items: center; margin-right: 4px; }
.combo { display: grid; grid-template: 1fr / 1fr; }
.combo select { grid-area: 1 / 1; appearance: none; background: #fff; border: 1px solid #c3c9cc; width: 100%; height: 15px; }
.combo svg { grid-area: 1 / 1; justify-self: end; align-self: center; margin-left: 1px; pointer-events: none; color: #999; z-index: 1; }
.combo.wide { width: 86px; }
.combo.size { width: 37px; }
.collapse { align-self: flex-end; margin: 0 auto 0 8px; }

/* workspace */
.work { display: flex; flex: 1; min-height: 0; }
.objects { width: 115px; border-left: 3px solid #d9e0e6; padding-right: 1px; flex: none; font: 6px/9px Roboto, "DejaVu Sans", sans-serif; background: #fff; }
.ohead { display: flex; align-items: center; height: 15px; padding: 0 4px 0 1px; gap: 2px; color: #a4373a; font-family: "Open Sans", "DejaVu Sans", sans-serif; }
.ohead h2 { font-size: 11px; line-height: 14px; white-space: nowrap; flex: 1; }
.ohead span { font-size: 8px; color: #555; }
.osearch { display: flex; align-items: center; height: 9px; margin: 0 1px; border: 1px solid #d6dde3; color: #4a7ebb; }
.osearch input { flex: 1; min-width: 0; height: 7px; padding: 0 2px; }
::placeholder { color: #444; opacity: 1; }
.osearch svg { width: 7px; height: 7px; }
.objects h3 { display: flex; justify-content: space-between; align-items: center; height: 10px; padding: 0 5px; font-size: 6px; font-weight: 700; }
.osearch + h3 { margin-top: 2px; }
.objects ul { display: grid; grid-auto-rows: 1fr; }
.tables { min-height: 174px; }
.few { min-height: 25px; }
.objects li { display: flex; align-items: center; gap: 3px; padding-right: 9px; white-space: nowrap; }
.sys { color: #9d9d9d; }
.sys svg { opacity: .5; }
.sel { background: #ffbfc3; }

.doc { display: flex; flex-direction: column; flex: 1; min-width: 0; background: #fff; }
.doctabs { display: flex; height: 12px; border-bottom: 1px solid #aaa; flex: none; }
.doctab { display: flex; align-items: center; gap: 4px; padding: 0 3px; height: 12px; background: #ffbfc3; color: #333; }
.tabx { color: #999; margin-right: 2px; }
.sheet { flex: 1; padding-top: 1px; }

/* records */
.rec { display: grid; height: 18px; align-items: start; padding-left: 2px; grid-template-columns: 10px minmax(20px, 1fr) 43px 40px 39px 30px 13px 29px 13px 29px 12px 29px 13px 29px 9px 51px; }
.alt { background: linear-gradient(to left, #fff 10px, #f1f1f1 10px); }
.pick { height: 18px; border-left: 1px solid #666; display: flex; justify-content: center; padding-top: 2px; }
.pick svg { width: 5px; height: 6px; }
.c { height: 16px; margin: 1px 0 0 1px; border: 1px solid #c6cacd; background: #fff; color: #222; font: 700 6px/12px "DejaVu Sans Condensed", "DejaVu Sans", sans-serif; text-align: center; white-space: nowrap; }
.alt .c { background: #f0f0f0; }
.date { grid-column: -2; margin-left: 0; font: 700 8px/13px "Liberation Sans", sans-serif; color: #111; }
.c.blue { color: #1673c0; }
.c.crimson { color: #c8232c; }
.rec .peach { background: #fde4d0; }
.rec .cyan { background: #cfe8ef; }
.rec .lilac { background: #dcd8e8; }
.rec .rose { background: #eed0d1; }
.rec .green { background: #cbdcac; }
.rec input { appearance: none; width: 7px; height: 7px; margin-top: 1px; justify-self: center; background: #fff; border: 1px solid #777; }

.recnav { display: flex; align-items: center; height: 9px; padding: 0 2px; gap: 2px; font-size: 6px; line-height: 8px; background: #f0f1f3; border-top: 1px solid #ccc; white-space: nowrap; flex: none; }
.recnav svg { width: 7px; height: 6px; }
.pos { width: 27px; background: #fff; text-align: center; }
.nofilter { display: flex; align-items: center; gap: 2px; padding: 0 4px; border: solid #ccc; border-width: 0 1px; color: #aaa; }
.find { width: 37px; padding-right: 2px; background: #fff; }

.status { display: flex; align-items: center; justify-content: space-between; height: 16px; padding: 0 8px; font-size: 6px; background: #f0efee; flex: none; }

/* taskbar */
.taskbar { display: flex; align-items: stretch; height: 21px; background: linear-gradient(to right, #e4e9f0, #d8dfec); color: #222; flex: none; }
.start { display: flex; align-items: center; justify-content: center; width: 26px; }
.tsearch { display: flex; align-items: center; gap: 5px; width: 178px; padding: 0 5px; background: #fff; font-size: 8px; }
.tsearch input { flex: 1; min-width: 0; }
.apps { display: flex; flex: 1; }
.apps span { display: flex; align-items: center; justify-content: center; flex: 1; border-bottom: 2px solid transparent; padding-top: 1px; }
.apps svg { width: 13px; height: 13px; }
.apps svg.i10 { width: 10px; height: 10px; }
.apps svg.wide { width: 17px; height: 14px; }
.apps .open { border-color: #0a78d4; }
.apps .active { background: #f2f5f9; }
.tray { display: flex; align-items: center; justify-content: space-between; width: 157px; padding: 0 2px 0 8px; }
.tray time { display: grid; text-align: center; font-size: 6px; line-height: 8px; }
.note { width: 14px; height: 14px; }

/* form window */
.window { position: absolute; inset: 122px 202px 21px 32px; display: flex; flex-direction: column; background: #fff; border: solid #8b8b8b; border-width: 1px 1px 0; box-shadow: 0 2px 8px rgba(0, 0, 0, .4); }
.wbar { display: flex; align-items: center; height: 16px; flex: none; color: #222; }
.pale { color: #bbb; }
.wtitle { display: flex; flex: 1; justify-content: flex-end; gap: 3px; padding-left: 4px; }
.band { display: flex; align-items: center; justify-content: center; height: 27px; background: #3b8193; flex: none; }
.band h2 { margin-right: 95px; padding-bottom: 4px; font: 700 9px/14px "DejaVu Sans Condensed", "DejaVu Sans", sans-serif; color: #fff; }
.foot { height: 26px; }
.wbody { display: flex; flex: 1; min-height: 0; background: #ebf6f8; }
.strip { width: 8px; padding: 2px; background: #fff; border-left: 1px solid #666; }
.strip svg { width: 5px; height: 6px; }
.side { width: 284px; padding-top: 19px; flex: none; }
.panel { border: 1px solid #c3c9cb; }
.filters { height: 80px; padding: 12px 8px 0; display: flex; flex-direction: column; gap: 11px; }
.frow { display: flex; align-items: flex-start; gap: 4px; }
.frow label { width: 60px; height: 16px; background: #ececec; border: 1px solid #ddd; border-right: 2px solid #8d8d8d; border-bottom: 2px solid #8d8d8d; font: 700 7px/11px "DejaVu Sans Condensed", "DejaVu Sans", sans-serif; color: #222; text-align: center; }
.frow .second { margin-right: 6px; }
.frow .short { width: 56px; margin-left: -2px; }
.frow > input { width: 59px; height: 16px; background: #fff; border: 1px solid #c3c9cc; }
.frow select { height: 16px; }
.frow .combo svg { width: 9px; height: 14px; padding: 0 1px; background: #ddd; color: #555; }
.f-a { width: 71px; }
.f-b { width: 60px; }
.actions { display: grid; grid-template-columns: 59px 60px 59px 54px; grid-auto-rows: 16px; gap: 10px 4px; height: 82px; margin-top: 19px; padding: 13px 19px 0; }
.btn { display: flex; align-items: center; justify-content: center; height: 15px; background: #e1e1e1; border: 1px solid #c0c0c0; font: 700 7px/11px "DejaVu Sans Condensed", "DejaVu Sans", sans-serif; color: #222; white-space: nowrap; }
.red { color: #d02030; font-size: 8px; }
.hot { color: #2222d0; background: #e5f1fb; border-color: #7db7e8; }
.focus { color: #1c7fc4; border: 2px solid #2a7fc0; }
.door { width: 12px; height: 10px; }
.now { display: grid; justify-content: end; gap: 6px; padding: 10px 0 0 58px; font: 9px/14px "DejaVu Sans", sans-serif; color: #3a4250; }
.now span { text-align: left; }
.subform { display: flex; flex-direction: column; flex: 1; margin: 19px 26px 83px 32px; background: #fff; border: 1px solid #c3c9cb; }
.rows { flex: 1; padding-top: 1px; }
.subbtns { display: flex; gap: 2px; padding: 0 133px 26px 0; }
.grn { width: 59px; color: #1a8a1a; }
.del { width: 64px; color: #e8303a; }
.prt { width: 51px; color: #2222b8; margin-right: 1px; }
```
